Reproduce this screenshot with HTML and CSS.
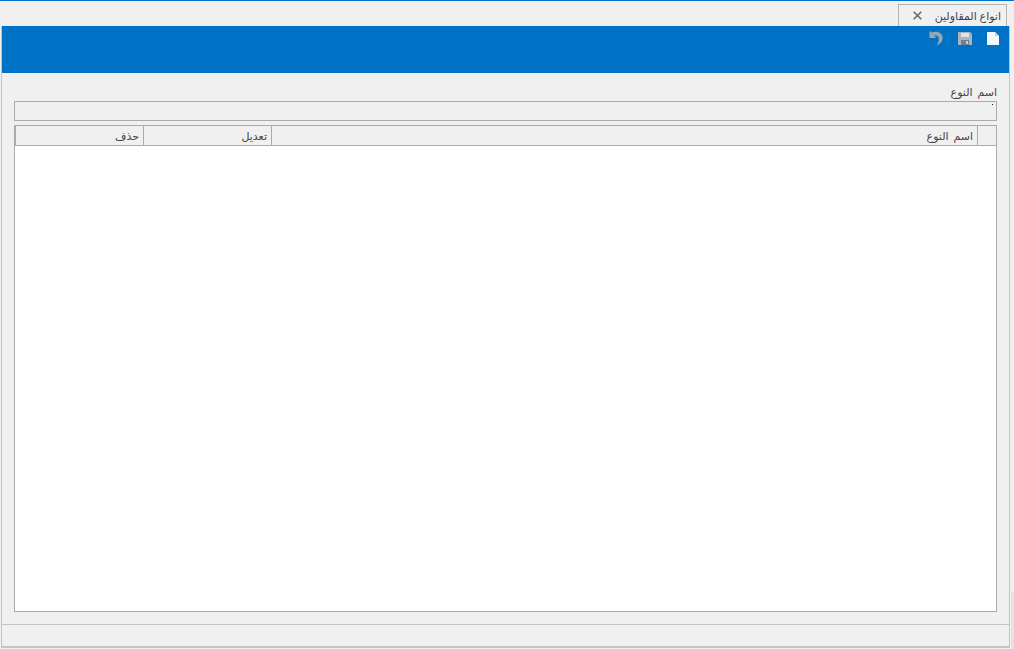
FILE: index.html
```html
<!DOCTYPE html>
<html lang="ar">
<head>
<meta charset="utf-8">
<title>انواع المقاولين</title>
<link rel="stylesheet" href="styles.css">
</head>
<body>
<div class="app">
  <div class="tabstrip">
    <div class="tab">
      <span class="tab-title">انواع المقاولين</span>
      <svg class="tab-close" width="9" height="9" viewBox="0 0 9 9"><path d="M0.7 0.7L8.3 8.3M8.3 0.7L0.7 8.3" stroke="#6a6a6a" stroke-width="1.6" fill="none"/></svg>
    </div>
  </div>
  <div class="window">
    <div class="toolbar">
      <svg class="tool tool-undo" width="14" height="16" viewBox="0 0 14 16"><path d="M0.5 1V8H7.5L5.2 5.7C7.4 4.9 9.8 6 9.8 8.8C9.8 11 9.2 13 7.8 15.5C11.6 13.6 13.7 11 13.7 8C13.7 3 8 0.4 3 2.6L0.5 1Z" fill="#9aa6b0"/></svg>
      <svg class="tool" width="14" height="13" viewBox="0 0 14 13"><path d="M0 0H12L14 2V13H0Z" fill="#a9b4bd"/><rect x="3" y="1" width="8" height="4" fill="#dfe3e6"/><rect x="3" y="8" width="8" height="5" fill="#6f7f8c"/><rect x="8" y="9" width="2" height="3" fill="#c8ced3"/></svg>
      <svg class="tool" width="12" height="13" viewBox="0 0 12 13"><path d="M0 0H8L12 4V13H0Z" fill="#f4f8fc"/><path d="M8 0V4H12Z" fill="#b5d2ec"/></svg>
    </div>
    <div class="content">
      <label class="field-label">اسم النوع</label>
      <div class="field"><span class="field-dot"></span></div>
      <div class="grid">
        <div class="grid-head">
          <div class="cell cell-corner"></div>
          <div class="cell cell-name">اسم النوع</div>
          <div class="cell cell-action">تعديل</div>
          <div class="cell cell-action">حذف</div>
        </div>
        <div class="grid-body"></div>
      </div>
    </div>
    <div class="statusbar"></div>
  </div>
  <div class="backdrop-edge"></div>
</div>
</body>
</html>
```
FILE: styles.css
```css
* { box-sizing: border-box; }
html, body { margin: 0; height: 100%; overflow: hidden; background: #f0f0f0; }
body { font-family: "Noto Sans", "DejaVu Sans", sans-serif; font-size: 11px; color: #444; }
.app {
  position: relative;
  height: 649px;
  display: flex;
  flex-direction: column;
  border-top: 1px solid #0072c6;
  padding: 0 4px 1px 1px;
}
.backdrop-edge {
  position: absolute;
  right: 0;
  top: 591px;
  bottom: 0;
  width: 3px;
  background: #e3e3e3;
}
.tabstrip {
  height: 25px;
  display: flex;
  padding: 3px 3px 0 0;
  justify-content: flex-end;
  flex: none;
}
.tab {
  width: 109px;
  height: 22px;
  background: #f0f0f0;
  border: 1px solid #b4b4b4;
  border-bottom: 0;
  display: flex;
  flex-direction: row-reverse;
  align-items: center;
  justify-content: flex-start;
  padding-right: 5px;
  gap: 13px;
}
.tab-title { direction: rtl; white-space: nowrap; line-height: 16px; }
.window {
  flex: 1;
  display: flex;
  flex-direction: column;
  border: 1px solid #c4c4c4;
  border-top: 0;
  border-bottom: 2px solid #c4c4c4;
}
.toolbar {
  flex: none;
  height: 47px;
  background: #0072c6;
  display: flex;
  justify-content: flex-end;
  align-items: flex-start;
  gap: 15px;
  padding: 6px 10px 0 0;
}
.tool-undo { margin-top: -2px; }
.content {
  flex: 1;
  min-height: 0;
  padding: 12px;
  display: flex;
  flex-direction: column;
  direction: rtl;
}
.field-label { height: 16px; line-height: 14px; word-spacing: 2px; white-space: nowrap; }
.field {
  height: 20px;
  border: 1px solid #ababab;
  background: #f0f0f0;
  position: relative;
  flex: none;
}
.field-dot { position: absolute; top: 2px; right: 3px; width: 1px; height: 1px; background: #222; }
.grid {
  margin-top: 4px;
  flex: 1;
  display: flex;
  flex-direction: column;
  border: 1px solid #ababab;
  background: #fff;
}
.grid-head {
  height: 20px;
  flex: none;
  display: flex;
  background: #f0f0f0;
  border-bottom: 1px solid #ababab;
}
.cell {
  border-left: 1px solid #ababab;
  line-height: 20px;
  padding-right: 4px;
  word-spacing: 2px;
  white-space: nowrap;
}
.cell-corner { width: 19px; flex: none; padding: 0; }
.cell-name { flex: 1; }
.cell-action { width: 128px; flex: none; }
.grid-body { flex: 1; }
.statusbar {
  flex: none;
  height: 22px;
  border-top: 1px solid #c4c4c4;
  background: #f0f0f0;
}
```
